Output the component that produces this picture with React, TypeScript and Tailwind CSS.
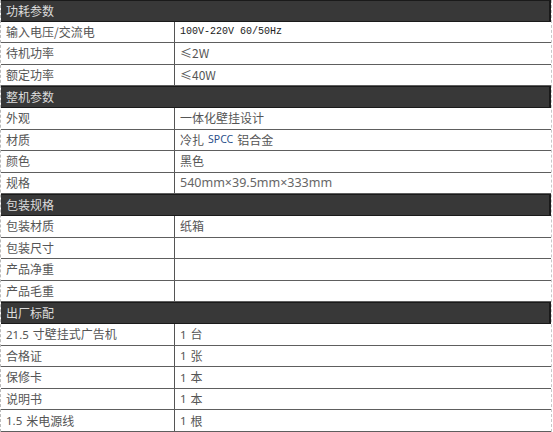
import React from 'react'

type Row = { label: React.ReactNode; value?: React.ReactNode }
type Section = { title: string; rows: Row[] }

const mono = { fontFamily: '"Liberation Mono", "Noto Sans CJK SC", monospace' }
const latin = { fontFamily: '"Noto Sans", "Liberation Sans", sans-serif' }

const Num = ({ children }: { children: React.ReactNode }) => (
  <span className="text-[11.5px] mr-[4px]" style={latin}>
    {children}
  </span>
)

const sections: Section[] = [
  {
    title: '功耗参数',
    rows: [
      {
        label: '输入电压/交流电',
        value: (
          <span className="text-[10px] text-[#222]" style={mono}>
            100V-220V 60/50Hz
          </span>
        ),
      },
      { label: '待机功率', value: '≤2W' },
      { label: '额定功率', value: '≤40W' },
    ],
  },
  {
    title: '整机参数',
    rows: [
      { label: '外观', value: '一体化壁挂设计' },
      {
        label: '材质',
        value: (
          <>
            冷扎
            <span className="text-[10.5px] text-[#2a4f8a] mx-[4px]" style={latin}>
              SPCC
            </span>
            铝合金
          </>
        ),
      },
      { label: '颜色', value: '黑色' },
      {
        label: '规格',
        value: (
          <span className="text-[12.5px] text-[#666]" style={latin}>
            540mm×39.5mm×333mm
          </span>
        ),
      },
    ],
  },
  {
    title: '包装规格',
    rows: [
      { label: '包装材质', value: '纸箱' },
      { label: '包装尺寸' },
      { label: '产品净重' },
      { label: '产品毛重' },
    ],
  },
  {
    title: '出厂标配',
    rows: [
      { label: <><Num>21.5</Num>寸壁挂式广告机</>, value: <><Num>1</Num>台</> },
      { label: '合格证', value: <><Num>1</Num>张</> },
      { label: '保修卡', value: <><Num>1</Num>本</> },
      { label: '说明书', value: <><Num>1</Num>本</> },
      { label: <><Num>1.5</Num>米电源线</>, value: <><Num>1</Num>根</> },
    ],
  },
]

export default function App() {
  return (
    <div
      className="w-[553px] h-[432px] bg-white overflow-hidden"
      style={{ fontFamily: '"Noto Sans CJK SC", "Noto Sans", sans-serif' }}
    >
      <div className="w-[552px] border-l border-r border-dashed border-l-[#bbb] border-r-[#c8c8c8]">
        {sections.map((s) => (
          <div key={s.title}>
            <div className="h-[21.6px] flex items-center px-[5px] bg-[#383838] border-t border-b border-[#1a1a1a] text-[12px] text-[#dcdcdc] border-r-2 border-r-[#1a1a1a]">
              {s.title}
            </div>
            {s.rows.map((r, i) => (
              <div
                key={i}
                className="h-[21.6px] flex border-b border-[#5e5e5e] text-[12px] text-[#555]"
              >
                <div className="w-[174px] shrink-0 flex items-center px-[5px] border-r border-[#555] whitespace-nowrap">
                  {r.label}
                </div>
                <div className="flex-1 flex items-center px-[5px] whitespace-nowrap">{r.value}</div>
              </div>
            ))}
          </div>
        ))}
      </div>
    </div>
  )
}
